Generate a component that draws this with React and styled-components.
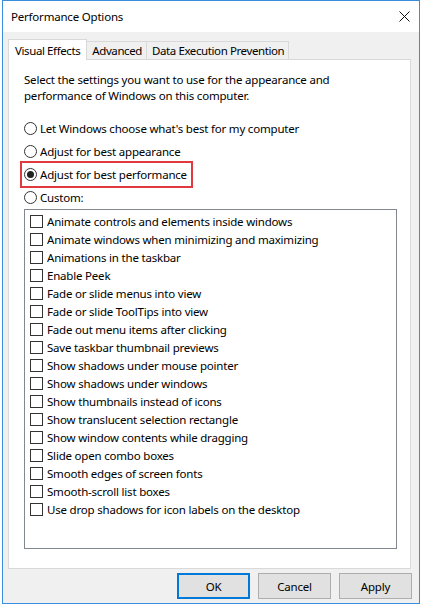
import React from 'react';
import styled, {createGlobalStyle} from 'styled-components';

const EFFECTS = [
  'Animate controls and elements inside windows',
  'Animate windows when minimizing and maximizing',
  'Animations in the taskbar',
  'Enable Peek',
  'Fade or slide menus into view',
  'Fade or slide ToolTips into view',
  'Fade out menu items after clicking',
  'Save taskbar thumbnail previews',
  'Show shadows under mouse pointer',
  'Show shadows under windows',
  'Show thumbnails instead of icons',
  'Show translucent selection rectangle',
  'Show window contents while dragging',
  'Slide open combo boxes',
  'Smooth edges of screen fonts',
  'Smooth-scroll list boxes',
  'Use drop shadows for icon labels on the desktop',
];

const RADIOS = [
  {label: "Let Windows choose what's best for my computer"},
  {label: 'Adjust for best appearance'},
  {label: 'Adjust for best performance', checked: true, highlighted: true},
  {label: 'Custom:'},
];

const TABS = ['Visual Effects', 'Advanced', 'Data Execution Prevention'];

const App = () => {
  return (
    <>
      <GlobalStyle />
      <ScWindow>
        <ScTitleBar>
          <ScTitle>Performance Options</ScTitle>
          <ScClose aria-label="Close">
            <svg width="11" height="11" viewBox="0 0 11 11">
              <path d="M0.5 0.5L10.5 10.5M10.5 0.5L0.5 10.5" stroke="#111" strokeWidth="1" />
            </svg>
          </ScClose>
        </ScTitleBar>
        <ScBody>
          <ScTabBar>
            {TABS.map((tab, index) => (
              <ScTab key={tab} $active={index === 0}>
                {tab}
              </ScTab>
            ))}
          </ScTabBar>
          <ScPanel>
            <ScDescription>
              Select the settings you want to use for the appearance and
              <br />
              performance of Windows on this computer.
            </ScDescription>
            <ScRadioGroup>
              {RADIOS.map((item) => (
                <ScRadioRow key={item.label} $highlighted={item.highlighted}>
                  <ScRadio $checked={item.checked} />
                  <span>{item.label}</span>
                </ScRadioRow>
              ))}
            </ScRadioGroup>
            <ScListBox>
              {EFFECTS.map((item) => (
                <ScCheckRow key={item}>
                  <ScCheckbox />
                  <span>{item}</span>
                </ScCheckRow>
              ))}
            </ScListBox>
          </ScPanel>
          <ScButtonRow>
            <ScButton $primary>OK</ScButton>
            <ScButton>Cancel</ScButton>
            <ScButton>Apply</ScButton>
          </ScButtonRow>
        </ScBody>
      </ScWindow>
    </>
  );
};

export default App;

const GlobalStyle = createGlobalStyle`
  html, body {
    margin: 0;
    background: #ffffff;
  }
  body {
    font-family: 'Noto Sans', 'Open Sans', sans-serif;
    font-size: 11.5px;
    letter-spacing: -0.2px;
    color: #000;
  }
  * {
    box-sizing: border-box;
  }
`;

const ScWindow = styled.div`
  margin-left: 2px;
  width: 418px;
  height: 604px;
  border: 1px solid #3b8ede;
  display: flex;
  flex-direction: column;
  background: #f0f0f0;
`;

const ScTitleBar = styled.div`
  height: 31px;
  flex-shrink: 0;
  background: #ffffff;
  display: flex;
  align-items: center;
  justify-content: space-between;
  padding: 0 9px 0 8px;
`;

const ScTitle = styled.span`
  font-size: 11.5px;
`;

const ScClose = styled.span`
  display: flex;
  align-items: center;
`;

const ScBody = styled.div`
  flex: 1;
  display: flex;
  flex-direction: column;
  padding: 7px 8px 0 5px;
`;

const ScTabBar = styled.div`
  display: flex;
  align-items: flex-end;
  height: 20px;
  position: relative;
  z-index: 1;
`;

const ScTab = styled.div`
  height: ${(p) => (p.$active ? '21px' : '18px')};
  margin-bottom: ${(p) => (p.$active ? '-1px' : '0')};
  padding: ${(p) => (p.$active ? '0 6px 0 6px' : '0 4px 0 5px')};
  display: flex;
  align-items: center;
  letter-spacing: -0.4px;
  background: ${(p) => (p.$active ? '#ffffff' : '#f0f0f0')};
  border: 1px solid #d9d9d9;
  border-bottom: none;
  margin-left: ${(p) => (p.$active ? '0' : '-1px')};
  white-space: nowrap;
`;

const ScPanel = styled.div`
  height: 510px;
  background: #ffffff;
  border: 1px solid #d9d9d9;
  padding: 12px 0 0 15px;
`;

const ScDescription = styled.p`
  margin: 0;
  line-height: 16px;
`;

const ScRadioGroup = styled.div`
  margin-top: 13px;
  display: flex;
  flex-direction: column;
  align-items: flex-start;
`;

const ScRadioRow = styled.div`
  height: 23px;
  display: flex;
  align-items: center;
  gap: 3px;
  ${(p) =>
    p.$highlighted &&
    `
    margin-left: -2px;
    padding: 0 4px 0 2px;
    outline: 2px solid #e0393e;
  `}
`;

const ScRadio = styled.span`
  width: 13px;
  height: 13px;
  border: 1px solid #333333;
  border-radius: 50%;
  background: #ffffff;
  display: flex;
  align-items: center;
  justify-content: center;
  flex-shrink: 0;
  &::after {
    content: '';
    width: 7px;
    height: 7px;
    border-radius: 50%;
    background: #222222;
    display: ${(p) => (p.$checked ? 'block' : 'none')};
  }
`;

const ScListBox = styled.div`
  width: 373px;
  height: 340px;
  border: 1px solid #828790;
  background: #ffffff;
  padding: 2px 0 0 5px;
`;

const ScCheckRow = styled.div`
  height: 18px;
  display: flex;
  align-items: center;
  gap: 4px;
  white-space: nowrap;
`;

const ScCheckbox = styled.span`
  width: 13px;
  height: 13px;
  border: 1px solid #333333;
  background: #ffffff;
  flex-shrink: 0;
`;

const ScButtonRow = styled.div`
  display: flex;
  justify-content: flex-end;
  gap: 8px;
  margin-top: 4px;
  margin-right: -1px;
`;

const ScButton = styled.button`
  width: 73px;
  height: 26px;
  font-family: inherit;
  font-size: 11.5px;
  letter-spacing: inherit;
  color: #000;
  background: #e1e1e1;
  border: ${(p) => (p.$primary ? '2px solid #0078d7' : '1px solid #adadad')};
  padding: 0;
`;
